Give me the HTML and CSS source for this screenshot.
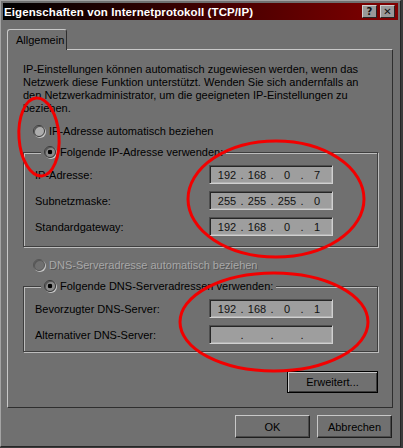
FILE: index.html
```html
<!DOCTYPE html>
<html lang="de">
<head>
    <meta charset="UTF-8">
    <title>Eigenschaften von Internetprotokoll (TCP/IP)</title>
    <link rel="stylesheet" href="styles.css">
</head>
<body>
    <div class="window">
        <div class="titlebar">
            <span class="title">Eigenschaften von Internetprotokoll (TCP/IP)</span>
            <span class="tb-buttons">
                <span class="tb-btn">?</span>
                <span class="tb-btn">✕</span>
            </span>
        </div>

        <div class="client">
            <div class="tabs">
                <div class="tab">Allgemein</div>
            </div>

            <div class="panel">
                <p class="intro">IP-Einstellungen können automatisch zugewiesen werden, wenn das Netzwerk diese Funktion unterstützt. Wenden Sie sich andernfalls an den Netzwerkadministrator, um die geeigneten IP-Einstellungen zu beziehen.</p>

                <div class="radio-row"><span class="radio"></span>IP-Adresse automatisch beziehen</div>

                <div class="group">
                    <div class="legend"><span class="radio checked"></span>Folgende IP-Adresse verwenden:</div>
                    <div class="fields">
                        <span class="label">IP-Adresse:</span>
                        <div class="ip"><span class="oct">192</span><span class="dot">.</span><span class="oct">168</span><span class="dot">.</span><span class="oct">0</span><span class="dot">.</span><span class="oct">7</span></div>
                        <span class="label">Subnetzmaske:</span>
                        <div class="ip"><span class="oct">255</span><span class="dot">.</span><span class="oct">255</span><span class="dot">.</span><span class="oct">255</span><span class="dot">.</span><span class="oct">0</span></div>
                        <span class="label">Standardgateway:</span>
                        <div class="ip"><span class="oct">192</span><span class="dot">.</span><span class="oct">168</span><span class="dot">.</span><span class="oct">0</span><span class="dot">.</span><span class="oct">1</span></div>
                    </div>
                </div>

                <div class="radio-row disabled"><span class="radio"></span>DNS-Serveradresse automatisch beziehen</div>

                <div class="group dns">
                    <div class="legend"><span class="radio checked"></span>Folgende DNS-Serveradressen verwenden:</div>
                    <div class="fields">
                        <span class="label">Bevorzugter DNS-Server:</span>
                        <div class="ip"><span class="oct">192</span><span class="dot">.</span><span class="oct">168</span><span class="dot">.</span><span class="oct">0</span><span class="dot">.</span><span class="oct">1</span></div>
                        <span class="label">Alternativer DNS-Server:</span>
                        <div class="ip"><span class="oct"></span><span class="dot">.</span><span class="oct"></span><span class="dot">.</span><span class="oct"></span><span class="dot">.</span><span class="oct"></span></div>
                    </div>
                </div>

                <div class="panel-foot">
                    <button class="btn wide focused">Erweitert...</button>
                </div>
            </div>

            <div class="dialog-buttons">
                <button class="btn">OK</button>
                <button class="btn">Abbrechen</button>
            </div>
        </div>

        <!-- red marker circles drawn over the screenshot -->
        <svg class="marks" width="401" height="447" viewBox="0 0 401 447">
            <ellipse cx="39" cy="137" rx="20" ry="39" transform="rotate(-4 39 137)" />
            <ellipse cx="276" cy="199" rx="88" ry="58" stroke-width="5" />
            <ellipse cx="274" cy="322" rx="94" ry="49" stroke-width="6" />
        </svg>
    </div>
</body>
</html>
```

FILE: styles.css
```css
body {
    margin: 0;
    background: #3c3c3c;
    font-family: 'Liberation Sans', Arial, sans-serif;
    font-size: 11px;
    color: #000;
}

.window {
    position: relative;
    width: 401px;
    height: 447px;
    box-sizing: border-box;
    padding: 2px;
    border: 1px solid;
    border-color: #a4a4a4 #262626 #262626 #a4a4a4;
    background: #707070;
}

.titlebar {
    display: flex;
    align-items: center;
    height: 17px;
    padding-left: 1px;
    background: linear-gradient(to right, #000 0%, #2a0000 35%, #820000 100%);
}

.title {
    color: #fff;
    font-weight: bold;
    font-size: 11.5px;
    letter-spacing: 0.1px;
}

.tb-buttons {
    display: flex;
    gap: 3px;
    margin-left: auto;
    padding-right: 3px;
}

.tb-btn {
    width: 15px;
    height: 13px;
    box-sizing: border-box;
    border: 1px solid;
    border-color: #cfcfcf #262626 #262626 #cfcfcf;
    background: #999;
    color: #111;
    font-family: 'DejaVu Sans', sans-serif;
    font-size: 10px;
    font-weight: bold;
    line-height: 11px;
    text-align: center;
}

.client {
    padding: 9px 5px 0 4px;
}

.tabs {
    display: flex;
    height: 20px;
}

.tab {
    position: relative;
    z-index: 1;
    width: 60px;
    height: 21px;
    box-sizing: border-box;
    padding: 4px 0 0 8px;
    border: 1px solid;
    border-color: #c8c8c8 #2e2e2e transparent #c8c8c8;
    border-bottom: none;
    border-radius: 3px 3px 0 0;
    background: #707070;
    line-height: 13px;
}

.panel {
    height: 359px;
    box-sizing: border-box;
    padding: 13px 14px 0 15px;
    border: 1px solid;
    border-color: #c8c8c8 #2e2e2e #2e2e2e #c8c8c8;
}

.intro {
    margin: 0;
    line-height: 13px;
}

.radio-row {
    display: flex;
    align-items: center;
    gap: 4px;
    height: 16px;
    margin-top: 8px;
    padding-left: 10px;
}

.radio-row.disabled {
    margin-top: 10px;
    color: #a8a8a8;
    text-shadow: 1px 1px 0 #555;
}

.radio {
    flex: none;
    width: 12px;
    height: 12px;
    box-sizing: border-box;
    border: 1px solid #3a3a3a;
    border-radius: 50%;
    background: #adadad;
    box-shadow: inset 1px 1px 0 #575757, 1px 1px 0 #c4c4c4;
}

.radio.checked {
    background: radial-gradient(circle, #000 0 2px, #8a8a8a 2.6px);
}

.disabled .radio {
    background: #707070;
    border-color: #555;
}

.group {
    margin-top: 13px;
    padding: 0 0 10px 11px;
    border: 1px solid #3e3e3e;
    box-shadow: inset 1px 1px 0 #bdbdbd, 1px 1px 0 #bdbdbd;
}

.group.dns {
    padding-bottom: 7px;
}

.legend {
    display: flex;
    align-items: center;
    gap: 4px;
    width: fit-content;
    height: 16px;
    margin: -9px 0 0 6px;
    padding: 0 3px;
    background: #707070;
}

.fields {
    display: grid;
    grid-template-columns: 174px 124px;
    grid-auto-rows: 19px;
    row-gap: 7px;
    align-items: center;
    margin-top: 5px;
}

.ip {
    display: flex;
    align-items: center;
    height: 19px;
    box-sizing: border-box;
    padding-left: 6px;
    border: 1px solid;
    border-color: #4e4e4e #d0d0d0 #d0d0d0 #4e4e4e;
    box-shadow: inset 1px 1px 0 #262626, inset -1px -1px 0 #b4b4b4;
    background: #9e9e9e;
    color: #111;
}

.oct {
    width: 22px;
    text-align: center;
}

.dot {
    width: 8px;
    text-align: center;
}

.panel-foot {
    display: flex;
    justify-content: flex-end;
    margin-top: 19px;
}

.btn {
    width: 75px;
    height: 23px;
    box-sizing: border-box;
    padding: 0;
    border: 1px solid;
    border-color: #c8c8c8 #1e1e1e #1e1e1e #c8c8c8;
    box-shadow: inset -1px -1px 0 #4a4a4a;
    background: #707070;
    color: #000;
    font: inherit;
}

.btn.wide {
    width: 91px;
    height: 22px;
}

.btn.focused {
    border-color: #000;
    box-shadow: inset 1px 1px 0 #c8c8c8, inset -1px -1px 0 #3a3a3a;
}

.dialog-buttons {
    display: flex;
    justify-content: flex-end;
    gap: 7px;
    margin-top: 7px;
    padding-right: 1px;
}

.marks {
    position: absolute;
    top: -1px;
    left: -1px;
    pointer-events: none;
}

.marks ellipse {
    fill: none;
    stroke: #f20000;
    stroke-width: 3;
}
```
